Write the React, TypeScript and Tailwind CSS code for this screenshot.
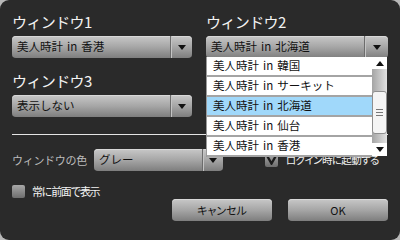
import React from "react";

const FONT = { fontFamily: '"Noto Sans CJK JP", "Noto Sans", sans-serif' };

function Arrow({ up = false }: { up?: boolean }) {
  return (
    <svg width="8" height="5" viewBox="0 0 8 5" className="block">
      {up ? <polygon points="0,5 8,5 4,0" fill="#111" /> : <polygon points="0,0 8,0 4,5" fill="#111" />}
    </svg>
  );
}

function Select({ text, arrowW = "w-[22px]" }: { text: string; arrowW?: string }) {
  return (
    <div className="h-[22px] w-full rounded-[4px] bg-gradient-to-b from-[#c8c8c8] via-[#a6a6a6] to-[#7e7e7e] shadow-[inset_0_1px_0_#d8d8d8] flex items-center">
      <div className="flex-1 pl-[5px] text-[11.5px] leading-none text-[#111] [word-spacing:1.5px] whitespace-nowrap">{text}</div>
      <div className={`${arrowW} h-full flex items-center justify-center border-l border-[#6c6c6c] shadow-[inset_1px_0_0_#c4c4c4]`}>
        <Arrow />
      </div>
    </div>
  );
}

function Label({ text }: { text: string }) {
  return <div className="text-[15px] leading-[20px] text-[#f2f2f2] tracking-[-0.6px] whitespace-nowrap">{text}</div>;
}

function Check({ checked }: { checked?: boolean }) {
  return (
    <div className="w-[13px] h-[13px] rounded-[2px] bg-gradient-to-b from-[#a8a8a8] to-[#6e6e6e] flex items-center justify-center shrink-0">
      {checked && (
        <svg width="11" height="10" viewBox="0 0 11 10">
          <path d="M1.5 1.5 L5.5 8.5 L9.5 1.5" stroke="#1c1c1c" strokeWidth="2.4" fill="none" />
        </svg>
      )}
    </div>
  );
}

function Button({ text }: { text: string }) {
  return (
    <div className="w-[100px] h-[22px] rounded-[4px] bg-gradient-to-b from-[#c8c8c8] via-[#a6a6a6] to-[#7e7e7e] shadow-[inset_0_1px_0_#d8d8d8] flex items-center justify-center text-[11px] leading-none text-[#111] [font-feature-settings:'palt']">
      {text}
    </div>
  );
}

const items = ["美人時計 in 韓国", "美人時計 in サーキット", "美人時計 in 北海道", "美人時計 in 仙台", "美人時計 in 香港"];

export default function App() {
  return (
    <div className="w-[400px] h-[240px] bg-[#b8b8b8]" style={FONT}>
      <div className="w-full h-full rounded-[9px] bg-[#2a2a2a] px-3 pt-[12px] flex flex-col">
        <div className="grid grid-cols-[180px_182px] gap-x-[14px]">
          <div className="flex flex-col">
            <Label text="ウィンドウ1" />
            <div className="mt-[4px]">
              <Select text="美人時計 in 香港" />
            </div>
            <div className="mt-[13px]">
              <Label text="ウィンドウ3" />
            </div>
            <div className="mt-[4px]">
              <Select text="表示しない" />
            </div>
          </div>
          <div className="flex flex-col">
            <Label text="ウィンドウ2" />
            <div className="mt-[4px] relative z-10">
              <Select text="美人時計 in 北海道" arrowW="w-[24px]" />
              <div className="absolute left-0 right-[1px] top-[calc(100%-1px)] flex">
                <div className="flex-1 flex flex-col border-l border-[#9a9a9a]">
                  {items.map((t, i) => (
                    <div
                      key={t}
                      className={`h-[20px] border-b-2 border-[#a4a4a4] pl-[6px] flex items-center text-[11.5px] leading-none text-[#111] [word-spacing:1.5px] whitespace-nowrap ${
                        i === 2 ? "bg-[#a0d8fa]" : "bg-white"
                      }`}
                    >
                      {t}
                    </div>
                  ))}
                </div>
                <div className="w-[15px] flex flex-col">
                  <div className="h-[12px] bg-white flex items-center justify-center">
                    <Arrow up />
                  </div>
                  <div className="h-[22px] bg-gradient-to-r from-[#a4a4a4] to-[#e2e2e2]" />
                  <div className="h-[43px] bg-gradient-to-r from-[#a4a4a4] to-[#e2e2e2]">
                    <div className="h-full rounded-[3px] border border-[#8e8e8e] bg-[#f4f4f4] flex items-center justify-center">
                      <div className="flex flex-col gap-[2px]">
                        <div className="w-[7px] h-px bg-[#777]" />
                        <div className="w-[7px] h-px bg-[#777]" />
                        <div className="w-[7px] h-px bg-[#777]" />
                      </div>
                    </div>
                  </div>
                  <div className="h-[9px] bg-gradient-to-r from-[#a4a4a4] to-[#e2e2e2]" />
                  <div className="h-[13px] bg-white flex items-center justify-center">
                    <Arrow />
                  </div>
                </div>
              </div>
            </div>
          </div>
        </div>

        <div className="mt-[17px] h-px bg-[#e4e4e4]" />

        <div className="mt-[14px] h-[22px] flex items-center">
          <div className="w-[82px] text-[11px] leading-none text-[#bcbcbc] tracking-[-0.3px] whitespace-nowrap">ウィンドウの色</div>
          <div className="w-[129px]">
            <Select text="グレー" arrowW="w-[21px]" />
          </div>
          <div className="ml-[42px] flex items-center gap-[8px]">
            <Check checked />
            <span className="text-[10.5px] leading-none text-[#f2f2f2] whitespace-nowrap tracking-[-0.6px] [font-feature-settings:'palt']">ログイン時に起動する</span>
          </div>
        </div>

        <div className="mt-[13px] h-[14px] flex items-center gap-[7px]">
          <Check />
          <span className="text-[11px] leading-none text-[#f2f2f2] whitespace-nowrap tracking-[-1.4px]">常に前面で表示</span>
        </div>

        <div className="mt-[1px] flex justify-end gap-[16px]">
          <Button text="キャンセル" />
          <Button text="OK" />
        </div>
      </div>
    </div>
  );
}
